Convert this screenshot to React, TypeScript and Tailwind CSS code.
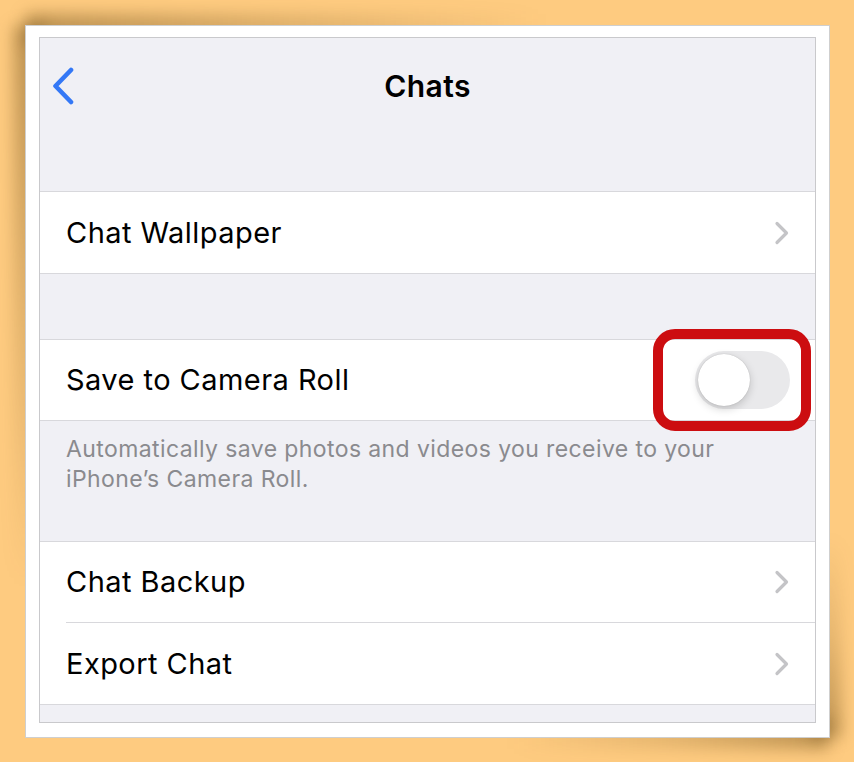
import React from 'react';

const ChevronRight: React.FC = () => (
  <svg width="16" height="24" viewBox="0 0 16 24" fill="none" className="shrink-0">
    <path d="M3 2.5 L12.5 12 L3 21.5" stroke="#c4c4c7" strokeWidth="3.2" strokeLinecap="round" strokeLinejoin="round" />
  </svg>
);

const ChevronLeft: React.FC = () => (
  <svg width="24" height="38" viewBox="0 0 24 38" fill="none">
    <path d="M20 3 L4.5 19 L20 35" stroke="#3478f6" strokeWidth="4.6" strokeLinecap="round" strokeLinejoin="round" />
  </svg>
);

const Toggle: React.FC = () => (
  <div className="w-[95px] h-[58px] rounded-full bg-[#e9e9eb] p-[3px] flex items-center">
    <div className="w-[52px] h-[52px] rounded-full bg-white shadow-[0_3px_8px_rgba(0,0,0,0.18),0_0_1px_rgba(0,0,0,0.25)]" />
  </div>
);

const Row: React.FC<{ label: string; tall?: boolean; children?: React.ReactNode }> = ({ label, tall, children }) => (
  <div className={`${tall ? 'h-[81px]' : 'h-[80px]'} flex items-center justify-between pl-[26px] pr-[25px] bg-white`}>
    <span className="text-[29px] text-black tracking-[0.45px]">{label}</span>
    {children ?? <ChevronRight />}
  </div>
);

export default function App() {
  return (
    <div
      className="w-[854px] h-[762px] bg-[#fecb80] isolate pt-[25px] pl-[25px] overflow-hidden"
      style={{ fontFamily: 'Inter, "Noto Sans", sans-serif' }}
    >
      <div className="relative w-[805px] h-[713px] bg-white border border-[#cfcfcf] pt-[11px] pl-[13px]">
        {/* curled paper shadows, top-left and bottom-right */}
        <div className="absolute -z-10 left-0 -top-[12px] w-[520px] h-[30px] blur-[8px] bg-gradient-to-r from-[rgba(90,60,10,0.4)] via-[rgba(90,60,10,0.18)] to-transparent" />
        <div className="absolute -z-10 -left-[12px] top-0 w-[30px] h-[560px] blur-[8px] bg-gradient-to-b from-[rgba(90,60,10,0.4)] via-[rgba(90,60,10,0.18)] to-transparent" />
        <div className="absolute -z-10 right-0 -bottom-[12px] w-[320px] h-[30px] blur-[8px] bg-gradient-to-l from-[rgba(90,60,10,0.4)] via-[rgba(90,60,10,0.15)] to-transparent" />
        <div className="absolute -z-10 -right-[12px] bottom-0 w-[30px] h-[200px] blur-[8px] bg-gradient-to-t from-[rgba(90,60,10,0.4)] via-[rgba(90,60,10,0.15)] to-transparent" />

        <div className="w-[777px] h-[686px] bg-[#f0f0f5] border border-[#c9c9cc] flex flex-col">
          {/* nav */}
          <div className="h-[153px]">
            <div className="h-[96px] flex items-center justify-center relative">
              <div className="absolute left-[11px] top-[29px]">
                <ChevronLeft />
              </div>
              <span className="text-[30px] font-semibold text-black tracking-[0.4px]">Chats</span>
            </div>
          </div>

          <div className="border-y border-[#d8d8dc]">
            <Row label="Chat Wallpaper" tall />
          </div>

          <div className="h-[65px]" />

          <div className="relative border-y border-[#d8d8dc]">
            <Row label="Save to Camera Roll">
              <Toggle />
            </Row>
            <div className="absolute left-[613px] top-[-11px] w-[158px] h-[102px] rounded-[22px] border-[10px] border-[#cc0d10]" />
          </div>

          <div className="h-[120px] pl-[26px] pr-[30px] pt-[13px]">
            <p className="text-[23px] leading-[30px] tracking-[0.4px] text-[#8a8a8e]">
              Automatically save photos and videos you receive to your <br />
              iPhone’s Camera Roll.
            </p>
          </div>

          <div className="border-y border-[#d8d8dc] bg-white">
            <Row label="Chat Backup" />
            <div className="ml-[26px] h-px bg-[#d8d8dc]" />
            <Row label="Export Chat" tall />
          </div>
        </div>
      </div>
    </div>
  );
}
